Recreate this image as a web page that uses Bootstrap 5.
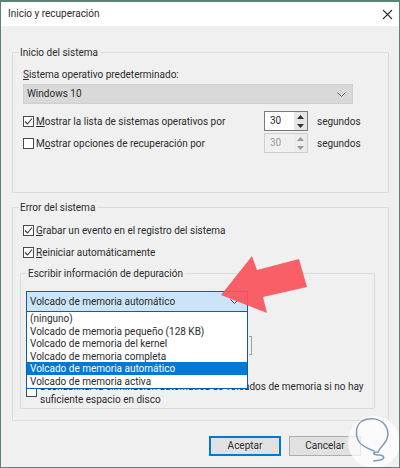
<!DOCTYPE html>
<html lang="es">
<head>
  <meta charset="UTF-8">
  <title>Inicio y recuperación</title>
  <link href="https://cdn.jsdelivr.net/npm/bootstrap@5.3.0/dist/css/bootstrap.min.css" rel="stylesheet">
  <script src="https://cdn.jsdelivr.net/npm/bootstrap@5.3.0/dist/js/bootstrap.bundle.min.js"></script>
  <style>
    html, body { margin: 0; width: 400px; height: 468px; overflow: hidden; }
    body { font-family: Roboto, "Liberation Sans", sans-serif; font-size: 10px; line-height: 14px; color: #2b2b2b; background: #f0f0f0; }
    .dlg { position: relative; width: 400px; height: 468px; border: 1px solid #5d8079; border-top-width: 2px; background: #f0f0f0; overflow: hidden; }
    .dlg-title { height: 24px; background: #fff; padding: 0 6px 0 7px; }
    .dlg-body { padding: 26px 10px 0 11px; }
    .grp { position: relative; border: 1px solid #dcdcdc; border-radius: 1px; }
    .grp-legend { position: absolute; top: -7px; left: 6px; background: #f0f0f0; padding: 0 2px 0 1px; }
    .grp-start { height: 141px; padding: 15px 0 0 10px; }
    .grp-error { height: 214px; margin-top: 14px; padding: 11px 0 0 10px; }
    .grp-debug { height: 136px; margin: 10px 13px 0 -3px; padding: 17px 0 0 5px; }
    .os-select { width: 330px; height: 20px; margin-top: 2px; background: #d9d9d9; border: 1px solid #cfcfcf; padding: 0 6px 0 3px; margin-bottom: 6px; }
    .chk-row { height: 22px; }
    .chk-text { padding-top: 2px; }
    .chk { width: 11px; height: 11px; flex: none; border: 1px solid #4a4a4a; background: #fff; margin-right: 2px; display: flex; }
    .chk svg { display: block; }
    .chk-lbl { width: 228px; flex: none; }
    .spin { width: 44px; height: 20px; border: 1px solid #7a7a7a; background: #fff; margin-right: 9px; padding-left: 5px; }
    .spin-off { border-color: #cfcfcf; background: #f0f0f0; color: #9a9a9a; }
    .spin-arrows { width: 13px; height: 100%; margin-left: auto; background: #e6e6e6; font-size: 0; }
    .spin-off .spin-arrows { background: #ececec; }
    .dbg-select { width: 222px; height: 21px; background: #cce4f7; border: 1px solid #0a5fa8; padding: 0 8px 0 3px; }
    .dbg-ghost { position: absolute; left: 228px; top: 62px; width: 3px; height: 19px; border: 1px solid #a0a0a0; border-left: 0; }
    .dbg-list { position: absolute; left: 5px; top: 38px; width: 222px; background: #fff; border: 1px solid #0a5fa8; border-top: 0; z-index: 2; }
    .dbg-item { height: 12.6px; line-height: 14px; padding-left: 3px; }
    .dbg-item.active-item { background: #0078d7; color: #fff; }
    .free-chk { position: absolute; left: 5px; top: 112px; }
    .free-txt { position: absolute; left: 19px; top: 106px; width: 340px; line-height: 13px; }
    .dlg-actions { padding: 15px 28px 0 0; gap: 8px; }
    .dlg-btn { width: 72px; height: 20px; background: #e1e1e1; border: 1px solid #adadad; padding: 0; font-size: 10px; line-height: 14px; color: #2b2b2b; border-radius: 0; }
    .dlg-btn.is-default { border: 2px solid #0078d7; }
    .arrow-mark { position: absolute; left: 209px; top: 243px; z-index: 5; }
    .wm { position: absolute; left: 343px; top: 410px; z-index: 6; }
  </style>
</head>
<body>
  <div class="dlg">
    <div class="dlg-title d-flex align-items-center justify-content-between">
      <span>Inicio y recuperación</span>
      <svg width="11" height="11" viewBox="0 0 11 11"><path d="M1 1 10 10M10 1 1 10" stroke="#333" stroke-width="1.1" fill="none"/></svg>
    </div>
    <div class="dlg-body">
      <div class="grp grp-start">
        <span class="grp-legend">Inicio del sistema</span>
        <div><u>S</u>istema operativo predeterminado:</div>
        <div class="os-select d-flex align-items-center justify-content-between">
          <span>Windows 10</span>
          <svg width="9" height="5" viewBox="0 0 9 5"><path d="M.5.5 4.5 4.5 8.5.5" stroke="#666" fill="none"/></svg>
        </div>
        <div class="chk-row d-flex align-items-center">
          <span class="chk"><svg width="9" height="9" viewBox="0 0 9 9"><path d="M1 4.5 3.5 7 8 1.5" stroke="#333" stroke-width="1.1" fill="none"/></svg></span>
          <span class="chk-lbl chk-text"><u>M</u>ostrar la lista de sistemas operativos por</span>
          <span class="spin d-flex align-items-center">30<span class="spin-arrows d-flex flex-column align-items-center justify-content-around"><svg width="7" height="4" viewBox="0 0 7 4"><path d="M3.5 0 7 4H0z" fill="#333"/></svg><svg width="7" height="4" viewBox="0 0 7 4"><path d="M0 0H7L3.5 4z" fill="#333"/></svg></span></span>
          <span class="chk-text">segundos</span>
        </div>
        <div class="chk-row d-flex align-items-center">
          <span class="chk"></span>
          <span class="chk-lbl chk-text">M<u>o</u>strar opciones de recuperación por</span>
          <span class="spin spin-off d-flex align-items-center">30<span class="spin-arrows d-flex flex-column align-items-center justify-content-around"><svg width="7" height="4" viewBox="0 0 7 4"><path d="M3.5 0 7 4H0z" fill="#999"/></svg><svg width="7" height="4" viewBox="0 0 7 4"><path d="M0 0H7L3.5 4z" fill="#999"/></svg></span></span>
          <span class="chk-text">segundos</span>
        </div>
      </div>
      <div class="grp grp-error">
        <span class="grp-legend">Error del sistema</span>
        <div class="chk-row d-flex align-items-center">
          <span class="chk"><svg width="9" height="9" viewBox="0 0 9 9"><path d="M1 4.5 3.5 7 8 1.5" stroke="#333" stroke-width="1.1" fill="none"/></svg></span>
          <span class="chk-text"><u>G</u>rabar un evento en el registro del sistema</span>
        </div>
        <div class="chk-row d-flex align-items-center">
          <span class="chk"><svg width="9" height="9" viewBox="0 0 9 9"><path d="M1 4.5 3.5 7 8 1.5" stroke="#333" stroke-width="1.1" fill="none"/></svg></span>
          <span class="chk-text"><u>R</u>einiciar automáticamente</span>
        </div>
        <div class="grp grp-debug">
          <span class="grp-legend">Escribir información de depuración</span>
          <div class="dbg-select d-flex align-items-center justify-content-between">
            <span>Volcado de memoria automático</span>
            <svg width="9" height="5" viewBox="0 0 9 5"><path d="M.5.5 4.5 4.5 8.5.5" stroke="#444" fill="none"/></svg>
          </div>
          <div class="dbg-ghost"></div>
          <div class="dbg-list">
            <div class="dbg-item">(ninguno)</div>
            <div class="dbg-item">Volcado de memoria pequeño (128 KB)</div>
            <div class="dbg-item">Volcado de memoria del kernel</div>
            <div class="dbg-item">Volcado de memoria completa</div>
            <div class="dbg-item active-item">Volcado de memoria automático</div>
            <div class="dbg-item">Volcado de memoria activa</div>
          </div>
          <span class="chk free-chk"></span>
          <div class="free-txt">Deshabilitar la eliminación automática de volcados de memoria si no hay<br>suficiente espacio en disco</div>
        </div>
      </div>
      <div class="dlg-actions d-flex justify-content-end">
        <button class="dlg-btn is-default">Aceptar</button>
        <button class="dlg-btn">Cancelar</button>
      </div>
    </div>
    <svg class="arrow-mark" width="100" height="72" viewBox="210 245 100 72"><path d="M221 295 252 256 257 270 299 259 307 287 263 297 267 313z" fill="#f9545c" fill-opacity=".93"/></svg>
    <svg class="wm" width="56" height="58" viewBox="344 412 56 58">
      <circle cx="374" cy="442" r="26" fill="#fff" fill-opacity=".72"/>
      <path d="M374 451C366 448 360 445 358 440 355 433 356 425 362 421 369 417 380 418 385 425 390 432 388 440 383 445 380 448 379 450 378 452 372 452 372 455 380 455 385 456 385 459 380 460L374 461" fill="none" stroke="#7f9abc" stroke-width="1.5" stroke-linecap="round"/>
    </svg>
  </div>
</body>
</html>
